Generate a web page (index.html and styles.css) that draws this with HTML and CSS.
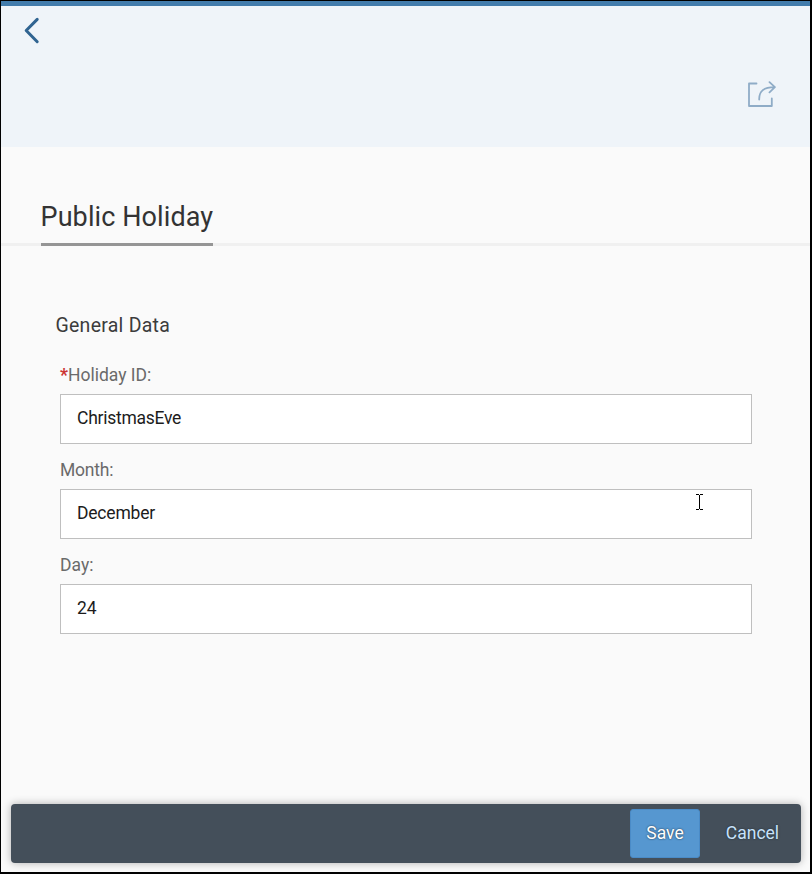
FILE: index.html
```html
<!DOCTYPE html>
<html lang="en">
<head>
<meta charset="utf-8">
<title>Public Holiday</title>
<link rel="stylesheet" href="styles.css">
</head>
<body>
<div class="page">
  <header class="header">
    <button class="icon-button back" aria-label="Back">
      <svg width="20" height="28" viewBox="0 0 20 28"><path d="M15.2 3.4 4.2 14.5l11 11.2" fill="none" stroke="#306491" stroke-width="3" stroke-linecap="round" stroke-linejoin="round"/></svg>
    </button>
    <button class="icon-button share" aria-label="Share">
      <svg width="30" height="28" viewBox="0 0 30 28" fill="none" stroke="#8facc7" stroke-width="1.8" stroke-linecap="round" stroke-linejoin="round"><path d="M9.5 3.5H2V26h22.8v-7.5M12.2 19.5C12 11 17 7.2 27.5 7.2M22.5 2.2l5.4 5-5.4 5.2"/></svg>
    </button>
  </header>
  <nav class="tabs"><h1 class="tab">Public Holiday</h1></nav>
  <main class="form">
    <h2 class="section-title">General Data</h2>
    <div class="field">
      <label class="label" for="holiday"><span class="required">*</span><span>Holiday ID:</span></label>
      <input class="input input-holiday" id="holiday" value="ChristmasEve">
    </div>
    <div class="field">
      <label class="label label-month" for="month">Month:</label>
      <input class="input input-month" id="month" value="December">
      <svg class="cursor" width="7" height="16" viewBox="0 0 7 16" shape-rendering="crispEdges"><path d="M0 0h3v1H0zM4 0h3v1H4zM3 1h1v14H3zM0 15h3v1H0zM4 15h3v1H4z"/></svg>
    </div>
    <div class="field">
      <label class="label" for="day">Day:</label>
      <input class="input" id="day" value="24">
    </div>
  </main>
  <footer class="footer">
    <button class="button save">Save</button>
    <button class="button cancel">Cancel</button>
  </footer>
</div>
</body>
</html>
```
FILE: styles.css
```css
* { box-sizing: border-box; }
body { margin: 0; background: #fafafa; font-family: Roboto, "Liberation Sans", sans-serif; }
button { padding: 0; border: 0; background: none; font: inherit; }
.page {
  display: flex;
  flex-direction: column;
  height: 874px;
  border: 1px solid #000;
  border-right-width: 2px;
  border-bottom-width: 2px;
  overflow: hidden;
}
.header {
  display: flex;
  flex: none;
  flex-direction: column;
  align-items: flex-start;
  height: 146px;
  padding: 10px 33px 0 20.5px;
  border-top: 5px solid #427cac;
  background: #eff4f9;
}
.icon-button svg { display: block; }
.share { align-self: flex-end; margin-top: 36px; }
.tabs { flex: none; height: 99px; padding: 50px 40px 0 39.5px; border-bottom: 3px solid #f0f0f0; }
.tab {
  width: 172px;
  height: 49px;
  margin: 0;
  border-bottom: 3px solid #959595;
  color: #333;
  font-size: 27px;
  font-weight: 400;
  line-height: 40px;
  letter-spacing: 0.1px;
  white-space: nowrap;
}
.form { flex: 1; padding: 67px 59px 0; }
.section-title {
  height: 24px;
  margin: 0 0 24px -4.5px;
  color: #3c3c3c;
  font-size: 19.5px;
  font-weight: 400;
  line-height: 26px;
  letter-spacing: 0.25px;
}
.field { position: relative; height: 95.2px; }
.label { display: block; height: 33px; color: #6a6a6a; font-size: 17.5px; line-height: 28px; }
.label-month { letter-spacing: -0.2px; }
.required { display: inline-block; width: 8px; color: #c33; font-weight: 700; }
.input {
  display: block;
  width: 692px;
  height: 50px;
  padding: 0 16px 3px;
  border: 1px solid #bfbfbf;
  border-radius: 0;
  background: #fff;
  color: #1c1c1c;
  font-family: inherit;
  font-size: 17.5px;
}
.input-holiday { letter-spacing: -0.26px; }
.input-month { letter-spacing: -0.2px; }
.cursor { position: absolute; left: 636px; top: 38px; }
.footer {
  display: flex;
  flex: none;
  align-items: center;
  justify-content: flex-end;
  height: 59px;
  margin: 0 9px 9px 10px;
  padding-right: 5px;
  border-radius: 4px;
  background: #444f5a;
  box-shadow: 0 0 8px rgba(0, 0, 0, 0.3);
}
.button { height: 49px; padding-bottom: 2px; font-size: 17.5px; text-shadow: 0 0 2px #1d2a35; }
.save { width: 70px; border: 1px solid #4a8bc7; border-radius: 3px; background: #5697d0; color: #fff; }
.cancel { width: 96px; padding-left: 9px; color: #c8e2fa; }
```
